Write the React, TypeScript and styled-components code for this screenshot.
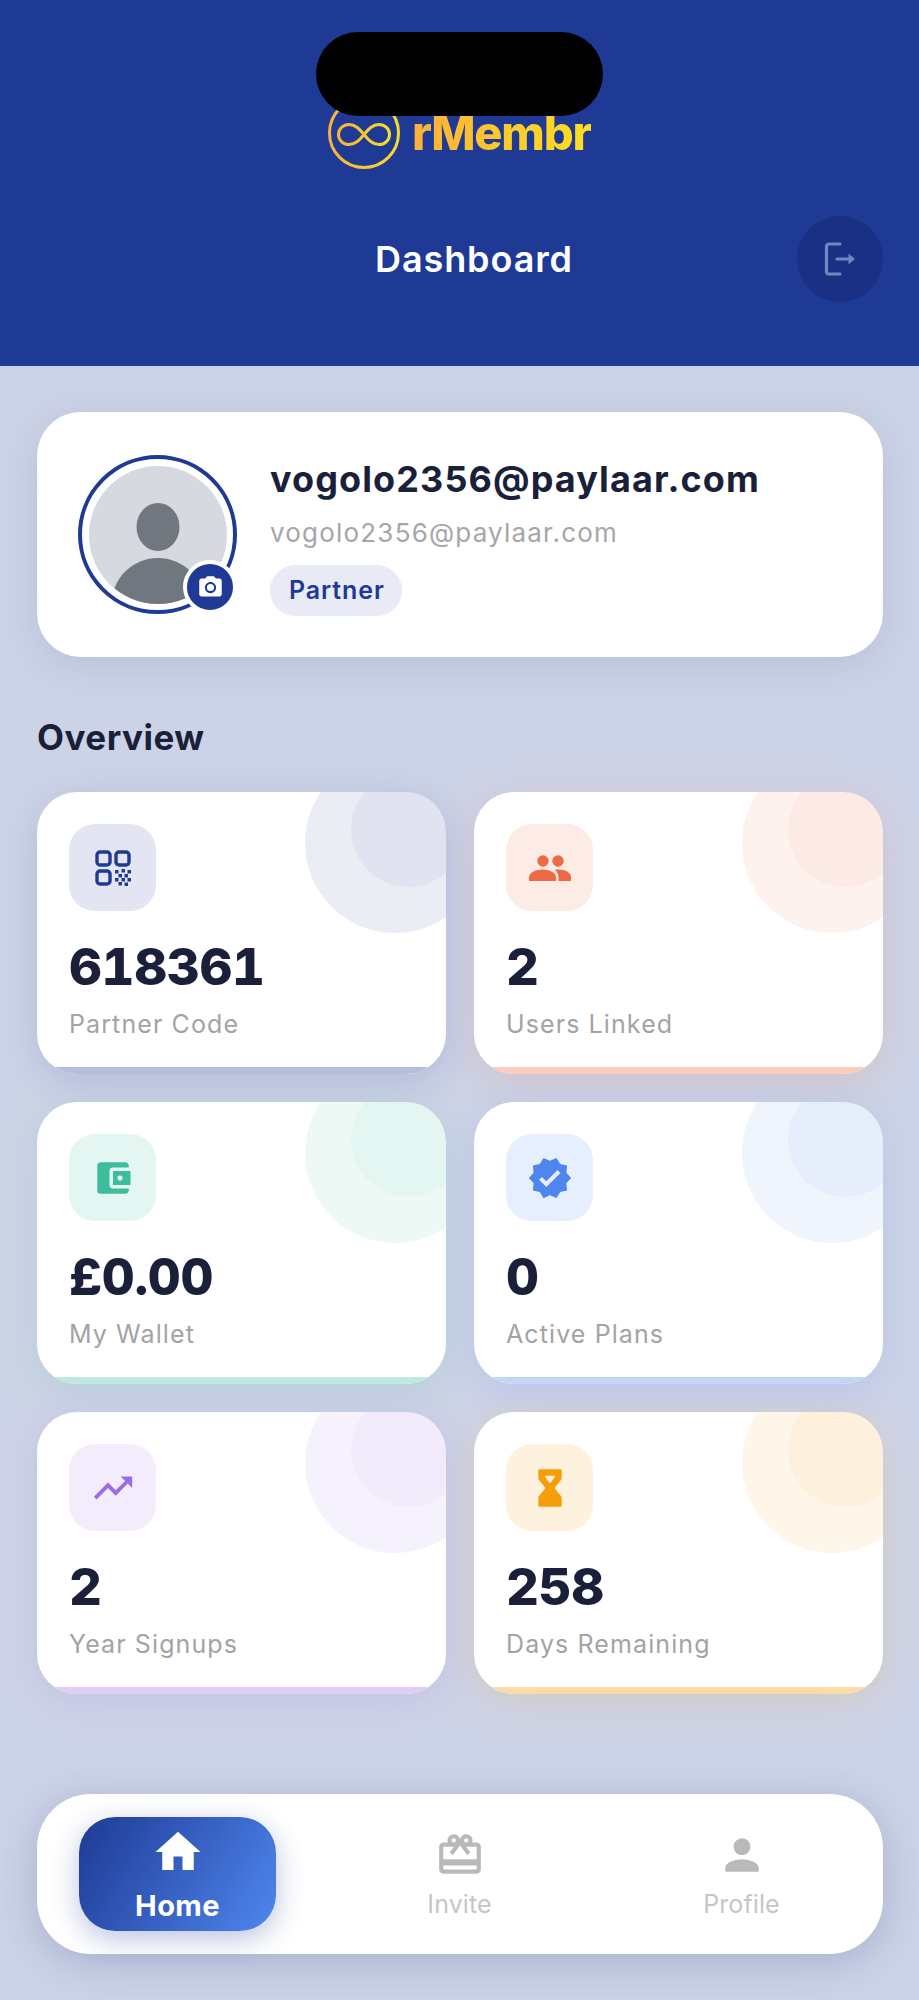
import React from "react"
import styled, { createGlobalStyle } from "styled-components"
import {
	MdAccountBalanceWallet,
	MdCardGiftcard,
	MdHome,
	MdPerson,
	MdPhotoCamera,
	MdTrendingUp,
	MdVerified,
} from "react-icons/md"

const GlobalStyle = createGlobalStyle`
	html, body {
		margin: 0;
		padding: 0;
		background: #cdd3e6;
		font-family: "Inter", "Liberation Sans", sans-serif;
	}
`

const Page = styled.div`
	position: relative;
	width: 919px;
	height: 2000px;
	overflow: hidden;
	background: #cdd3e6;
`

const Header = styled.header`
	height: 366px;
	box-sizing: border-box;
	padding-top: 101px;
	background: #1e3a94;
	display: flex;
	flex-direction: column;
`

const Notch = styled.div`
	position: absolute;
	top: 32px;
	left: 316px;
	width: 287px;
	height: 84px;
	border-radius: 42px;
	background: #000;
`

const LogoRow = styled.div`
	display: flex;
	align-items: center;
	justify-content: center;
	gap: 12px;
	height: 64px;
`

const LogoMark = styled.svg`
	width: 72px;
	height: 72px;
	flex: none;
`

const LogoText = styled.span`
	font-size: 47px;
	line-height: 64px;
	font-weight: 800;
	letter-spacing: -1.2px;
	background: linear-gradient(90deg, #fbb03b, #fde021);
	-webkit-background-clip: text;
	background-clip: text;
	color: transparent;
`

const TitleRow = styled.div`
	display: flex;
	align-items: center;
	margin-top: 51px;
	padding: 0 36px 0 151px;
`

const Title = styled.h1`
	flex: 1;
	margin: 0;
	text-align: center;
	color: #fff;
	font-size: 36px;
	line-height: 44px;
	font-weight: 600;
	letter-spacing: 0.9px;
`

const LogoutButton = styled.button`
	width: 86px;
	height: 86px;
	padding: 0;
	border: none;
	border-radius: 50%;
	background: #1a3085;
	color: #7485c2;
	display: flex;
	align-items: center;
	justify-content: center;
`

const Content = styled.main`
	padding: 46px 36px 0 37px;
`

const ProfileCard = styled.section`
	height: 245px;
	box-sizing: border-box;
	padding-left: 41px;
	border-radius: 44px;
	background: #fff;
	box-shadow: 0 8px 40px rgba(30, 58, 138, 0.12);
	display: flex;
	align-items: center;
	gap: 33px;
`

const AvatarRing = styled.div`
	position: relative;
	width: 159px;
	height: 159px;
	flex: none;
	box-sizing: border-box;
	border: 4px solid #1e3a94;
	border-radius: 50%;
	display: flex;
	align-items: center;
	justify-content: center;
`

const AvatarImage = styled.svg`
	width: 138px;
	height: 138px;
	border-radius: 50%;
`

const CameraBadge = styled.div`
	position: absolute;
	right: -4px;
	bottom: -4px;
	width: 46px;
	height: 46px;
	border: 4px solid #fff;
	border-radius: 50%;
	background: #1e3a94;
	color: #fff;
	display: flex;
	align-items: center;
	justify-content: center;
	font-size: 27px;
`

const ProfileText = styled.div`
	padding-top: 3px;
	display: flex;
	flex-direction: column;
	align-items: flex-start;
`

const ProfileName = styled.div`
	color: #1a1f3a;
	font-size: 36px;
	line-height: 44px;
	font-weight: 700;
	letter-spacing: 1.1px;
`

const ProfileEmail = styled.div`
	margin-top: 16px;
	color: #a6a6a9;
	font-size: 26px;
	line-height: 32px;
	letter-spacing: 1.2px;
`

const RoleBadge = styled.span`
	margin-top: 16px;
	height: 51px;
	box-sizing: border-box;
	padding: 0 17px 0 19px;
	border-radius: 26px;
	background: #e8eaf5;
	color: #1e3a94;
	font-size: 25px;
	line-height: 51px;
	font-weight: 600;
	letter-spacing: 0.9px;
`

const SectionTitle = styled.h2`
	margin: 58px 0 33px;
	color: #1a1f3a;
	font-size: 35px;
	line-height: 44px;
	font-weight: 700;
	letter-spacing: 0.5px;
`

const StatGrid = styled.div`
	display: grid;
	grid-template-columns: 409px 409px;
	grid-auto-rows: 282px;
	gap: 28px;
`

const StatCard = styled.article<{ $accent: string }>`
	position: relative;
	overflow: hidden;
	box-sizing: border-box;
	padding: 32px;
	border-radius: 40px;
	background: #fff;
	box-shadow: 0 8px 36px ${(p) => p.$accent}26;
`

const BigCircle = styled.div<{ $accent: string }>`
	position: absolute;
	top: -39px;
	right: -39px;
	width: 180px;
	height: 180px;
	border-radius: 50%;
	background: ${(p) => p.$accent};
	opacity: 0.09;
`

const SmallCircle = styled.div<{ $accent: string }>`
	position: absolute;
	top: -20px;
	right: -20px;
	width: 115px;
	height: 115px;
	border-radius: 50%;
	background: ${(p) => p.$accent};
	opacity: 0.05;
`

const AccentBar = styled.div<{ $color: string }>`
	position: absolute;
	left: 0;
	right: 0;
	bottom: 0;
	height: 7px;
	background: ${(p) => p.$color};
`

const IconBox = styled.div<{ $bg: string; $color: string }>`
	position: relative;
	width: 87px;
	height: 87px;
	border-radius: 26px;
	background: ${(p) => p.$bg};
	color: ${(p) => p.$color};
	display: flex;
	align-items: center;
	justify-content: center;
	font-size: 42px;
`

const StatValue = styled.div`
	margin-top: 25px;
	color: #1a1f3a;
	font-size: 51px;
	line-height: 62px;
	font-weight: 800;
	letter-spacing: -0.3px;
	font-variant-numeric: tabular-nums;
`

const StatLabel = styled.div`
	margin-top: 10px;
	color: #a3a3a6;
	font-size: 25px;
	line-height: 32px;
	letter-spacing: 1.1px;
`

const BottomNav = styled.nav`
	margin-top: 100px;
	height: 160px;
	box-sizing: border-box;
	padding: 0 43px 0 42px;
	border-radius: 54px;
	background: #fff;
	box-shadow: 0 8px 40px rgba(30, 58, 138, 0.22);
	display: flex;
	align-items: center;
	justify-content: space-between;
`

const NavItem = styled.div<{ $active?: boolean }>`
	width: 197px;
	height: 114px;
	box-sizing: border-box;
	padding-top: ${(p) => (p.$active ? "8px" : "13px")};
	border-radius: 36px;
	background: ${(p) => (p.$active ? "linear-gradient(120deg, #1e3a94, #4f86ee)" : "transparent")};
	box-shadow: ${(p) => (p.$active ? "0 8px 28px rgba(30, 58, 148, 0.3)" : "none")};
	color: ${(p) => (p.$active ? "#fff" : "#b9b9b9")};
	display: flex;
	flex-direction: column;
	align-items: center;
	font-size: ${(p) => (p.$active ? "54px" : "50px")};
`

const NavLabel = styled.span<{ $active?: boolean }>`
	margin-top: ${(p) => (p.$active ? "9px" : "6px")};
	color: ${(p) => (p.$active ? "#fff" : "#c6c6c8")};
	font-size: ${(p) => (p.$active ? "29px" : "25px")};
	line-height: 36px;
	font-weight: ${(p) => (p.$active ? 700 : 400)};
	letter-spacing: ${(p) => (p.$active ? "0.4px" : "0.1px")};
`

const LogoutIcon = () => (
	<svg width="32" height="34" viewBox="0 0 32 34" fill="none" stroke="currentColor" strokeWidth="3.2" strokeLinecap="round" strokeLinejoin="round">
		<path d="M16 2H5a2.500 2.500 0 0 0-2.500 2.500v25A2.500 2.500 0 0 0 5 32h11" />
		<path d="M13 17h13" />
		<path d="M24.500 11.500 31 17l-6.500 5.500z" fill="currentColor" stroke="none" />
	</svg>
)

const QrIcon = () => (
	<svg width="36" height="36" viewBox="0 0 36 36" fill="none" stroke="currentColor" strokeWidth="3.4">
		<rect x="2" y="2" width="13" height="13" rx="3" />
		<rect x="21" y="2" width="13" height="13" rx="3" />
		<rect x="2" y="21" width="13" height="13" rx="3" />
		<g fill="currentColor" stroke="none">
			<rect x="20" y="20" width="3.500" height="3.500" />
			<rect x="26.500" y="19" width="3.500" height="3.500" />
			<rect x="32.500" y="20" width="3.500" height="3.500" />
			<rect x="23.500" y="24" width="3.500" height="3.500" />
			<rect x="29.500" y="24" width="3.500" height="3.500" />
			<rect x="20" y="28" width="3.500" height="3.500" />
			<rect x="26.500" y="28" width="3.500" height="3.500" />
			<rect x="32.500" y="28" width="3.500" height="3.500" />
			<rect x="23.500" y="32" width="3.500" height="3.500" />
			<rect x="29.500" y="32.500" width="3.500" height="3.500" />
		</g>
	</svg>
)

const PeopleIcon = () => (
	<svg width="42" height="26" viewBox="0 0 42 26" fill="currentColor">
		<circle cx="14" cy="6" r="5.700" />
		<circle cx="29" cy="6" r="5.700" />
		<path d="M1 26c-.6 0-1-.4-1-1v-2.500C0 17.500 6.500 14.500 13.500 14.500S27 17.500 27 22.500V25c0 .6-.4 1-1 1z" />
		<path d="M29.500 26v-3.500c0-3-1.300-5.800-3.800-7.700 1.200-.3 2.700-.4 4.300-.4 6 0 12 2.800 12 7.800V26z" />
	</svg>
)

const HourglassIcon = () => (
	<svg width="26" height="40" viewBox="0 0 26 40" fill="currentColor" fillRule="evenodd" stroke="currentColor" strokeWidth="2.4" strokeLinejoin="round">
		<path d="M2.500 2.500h21v8L16 20l7.500 9.500v8h-21v-8L10 20 2.500 10.500zM7 6.500v3L13 17.500 19 9.500v-3z" />
	</svg>
)

type Stat = {
	value: string
	label: string
	accent: string
	iconBg: string
	bar: string
	icon: React.ReactNode
}

const stats: Stat[] = [
	{ value: "618361", label: "Partner Code", accent: "#1e3a94", iconBg: "#e3e6f2", bar: "#b4bfdc", icon: <QrIcon /> },
	{ value: "2", label: "Users Linked", accent: "#ee6a45", iconBg: "#fdebe5", bar: "#fbcbbe", icon: <PeopleIcon /> },
	{ value: "£0.00", label: "My Wallet", accent: "#3dbd9b", iconBg: "#e4f6f1", bar: "#c0e9dd", icon: <MdAccountBalanceWallet /> },
	{ value: "0", label: "Active Plans", accent: "#4f86ee", iconBg: "#e6effd", bar: "#c3d6f8", icon: <MdVerified size={46} /> },
	{ value: "2", label: "Year Signups", accent: "#9b6ce6", iconBg: "#f2ecfc", bar: "#e0cdf5", icon: <MdTrendingUp size={46} /> },
	{ value: "258", label: "Days Remaining", accent: "#f59e0b", iconBg: "#fef2df", bar: "#fbdca8", icon: <HourglassIcon /> },
]

export default function App() {
	return (
		<Page>
			<GlobalStyle />
			<Header>
				<LogoRow>
					<LogoMark viewBox="0 0 72 72" fill="none">
						<defs>
							<linearGradient id="logoGold" x1="0" y1="0" x2="1" y2="0">
								<stop offset="0" stopColor="#fbb03b" />
								<stop offset="1" stopColor="#f7dc2a" />
							</linearGradient>
						</defs>
						<circle cx="36" cy="36" r="34.500" stroke="url(#logoGold)" strokeWidth="3" />
						<path
							d="M36 37.500c-4.500 5.500-8.500 10-15 10-6 0-10.500-4.500-10.500-10s4.500-10 10.500-10c6.500 0 10.500 4.500 15 10s8.500 10 15 10c6 0 10.500-4.500 10.500-10s-4.500-10-10.500-10c-6.500 0-10.500 4.500-15 10z"
							stroke="url(#logoGold)"
							strokeWidth="3"
						/>
					</LogoMark>
					<LogoText>rMembr</LogoText>
				</LogoRow>
				<TitleRow>
					<Title>Dashboard</Title>
					<LogoutButton aria-label="Log out">
						<LogoutIcon />
					</LogoutButton>
				</TitleRow>
			</Header>
			<Notch />

			<Content>
				<ProfileCard>
					<AvatarRing>
						<AvatarImage viewBox="0 0 138 138">
							<rect width="138" height="138" fill="#d6d9df" />
							<ellipse cx="69" cy="61" rx="21.500" ry="24" fill="#70777f" />
							<ellipse cx="69" cy="137" rx="46" ry="45" fill="#70777f" />
						</AvatarImage>
						<CameraBadge>
							<MdPhotoCamera />
						</CameraBadge>
					</AvatarRing>
					<ProfileText>
						<ProfileName>vogolo2356@paylaar.com</ProfileName>
						<ProfileEmail>vogolo2356@paylaar.com</ProfileEmail>
						<RoleBadge>Partner</RoleBadge>
					</ProfileText>
				</ProfileCard>

				<SectionTitle>Overview</SectionTitle>

				<StatGrid>
					{stats.map((stat) => (
						<StatCard key={stat.label} $accent={stat.accent}>
							<BigCircle $accent={stat.accent} />
							<SmallCircle $accent={stat.accent} />
							<AccentBar $color={stat.bar} />
							<IconBox $bg={stat.iconBg} $color={stat.accent}>
								{stat.icon}
							</IconBox>
							<StatValue>{stat.value}</StatValue>
							<StatLabel>{stat.label}</StatLabel>
						</StatCard>
					))}
				</StatGrid>

				<BottomNav>
					<NavItem $active>
						<MdHome />
						<NavLabel $active>Home</NavLabel>
					</NavItem>
					<NavItem>
						<MdCardGiftcard />
						<NavLabel>Invite</NavLabel>
					</NavItem>
					<NavItem>
						<MdPerson />
						<NavLabel>Profile</NavLabel>
					</NavItem>
				</BottomNav>
			</Content>
		</Page>
	)
}
